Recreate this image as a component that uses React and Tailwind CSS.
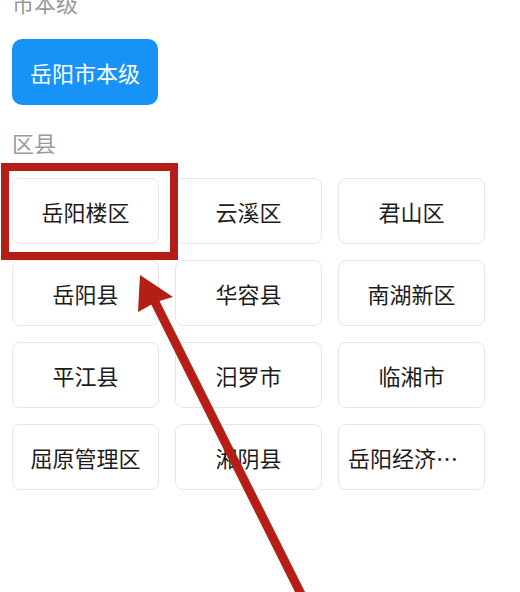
import { useState } from "react";

const areas = [
  "岳阳楼区",
  "云溪区",
  "君山区",
  "岳阳县",
  "华容县",
  "南湖新区",
  "平江县",
  "汨罗市",
  "临湘市",
  "屈原管理区",
  "湘阴县",
  "岳阳经济技术开发区",
];

export default function App() {
  const [selected, setSelected] = useState("岳阳市本级");

  return (
    <div
      className="relative w-[520px] h-[592px] overflow-hidden bg-white px-3"
      style={{ fontFamily: '"Noto Sans CJK SC", "Noto Sans", sans-serif' }}
    >
      {/* 市本级 */}
      <div className="mt-[-12px] h-[28px] leading-[28px] text-[22px] text-[#9a9a9a]">市本级</div>
      <button
        type="button"
        onClick={() => setSelected("岳阳市本级")}
        className="mt-[23px] w-[146px] h-[66px] rounded-[10px] bg-[#1793f8] text-white text-[22px] flex items-center justify-center"
      >
        岳阳市本级
      </button>

      {/* 区县 */}
      <div className="mt-[23px] h-[28px] leading-[28px] text-[22px] text-[#9a9a9a]">区县</div>
      <div className="mt-[22px] grid grid-cols-[147px_147px_147px] gap-x-[16px] gap-y-[16px]">
        {areas.map((a) => (
          <button
            key={a}
            type="button"
            onClick={() => setSelected(a)}
            className="h-[66px] rounded-[8px] border border-[#e6e6e6] bg-white text-[22px] text-[#1c1c1c] px-[9px] truncate text-center"
          >
            {a}
          </button>
        ))}
      </div>

      {/* annotation: red box */}
      <div className="absolute left-[1px] top-[163px] w-[177px] h-[97px] border-[8px] border-[#b51d17] pointer-events-none" />

      {/* annotation: arrow */}
      <svg
        className="absolute left-0 top-0 pointer-events-none"
        width="520"
        height="592"
        viewBox="0 0 520 592"
      >
        <line x1="154" y1="300" x2="305" y2="602" stroke="#b51d17" strokeWidth="9" />
        <polygon points="140,275 173,297 156,302 138,312" fill="#b51d17" />
      </svg>
    </div>
  );
}
